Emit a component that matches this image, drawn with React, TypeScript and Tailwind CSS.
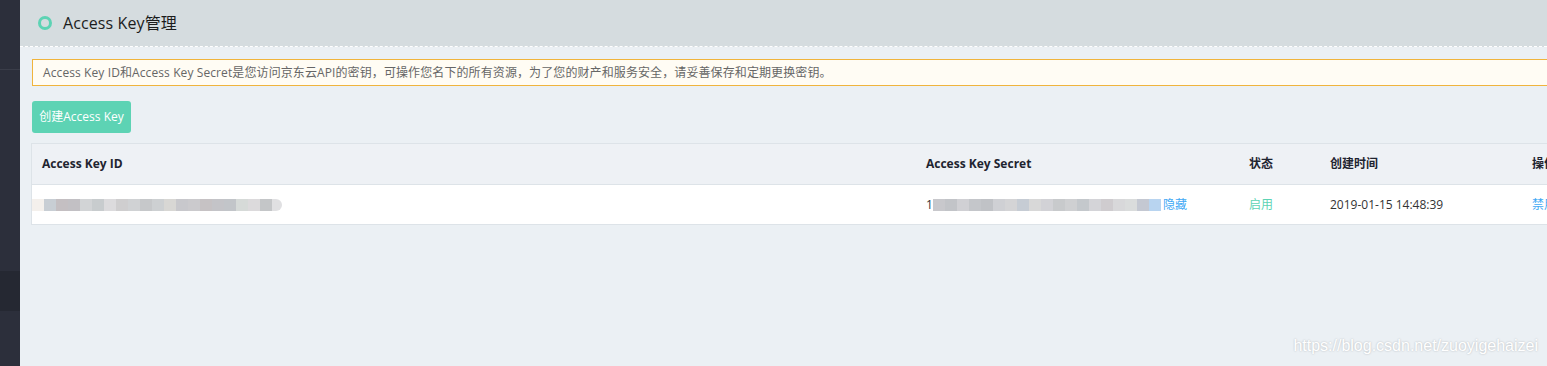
import React from "react";

const idBlocks = [
  "#f4f0ec", "#c8ced4", "#c4bfc2", "#c2c0c4", "#d2d4d6", "#c8ccce", "#dcdbdd", "#cfcecf",
  "#d0d2d4", "#c6c8ca", "#cdd0d2", "#d8d7d4", "#c8c8cc", "#cbcacd", "#c6c2c4", "#c4c4c8",
  "#c2c5c9", "#d6dad8", "#dcdadc", "#c4c6c8", "#e0e0e2",
];
const secretBlocks = [
  "#c8c8cc", "#c2c4c8", "#d0d0d4", "#c4c6ca", "#c0c2c6", "#cfd0d4", "#d4d4d6", "#c6ccd4",
  "#d8d8d8", "#d2d2d6", "#c8cacc", "#cfd0d2", "#c4c8cc", "#d4d4d8", "#cfcccf", "#d8d8da",
  "#dadcdc", "#c4c8d2", "#b8d4f0",
];

export default function App() {
  const font = { fontFamily: '"Open Sans", "Noto Sans CJK SC", sans-serif' };
  return (
    <div className="flex h-[366px] w-[1547px] overflow-hidden bg-[#ebf0f4]" style={font}>
      <div className="flex w-[20px] shrink-0 flex-col bg-[#2c2f3b]">
        <div className="h-[70px] border-b border-[#3a3d49]" />
        <div className="h-[201px]" />
        <div className="h-[40px] bg-[#252832]" />
        <div className="flex-1" />
      </div>
      <div className="flex min-w-0 flex-1 flex-col overflow-hidden">
        <div className="flex h-[47px] shrink-0 items-center border-b border-dashed border-white bg-[#d5dcdf] pl-[18px]">
          <span className="block h-[14px] w-[14px] rounded-full border-[3px] border-[#5dd3b4]" />
          <span className="ml-[11px] text-[16px] tracking-[0.1px] text-[#1c1c1c]">Access Key管理</span>
        </div>
        <div className="w-[1600px] pl-[12px]">
          <div className="mt-[12px] flex h-[27px] items-center border border-[#f0b43c] bg-[#fffcf4] pl-[10px] text-[12px] tracking-[0.1px] text-[#666]">
            Access Key ID和Access Key Secret是您访问京东云API的密钥，可操作您名下的所有资源，为了您的财产和服务安全，请妥善保存和定期更换密钥。
          </div>
          <button className="mt-[15px] flex h-[32px] w-[99px] items-center justify-center rounded-[3px] bg-[#5dd3b4] text-[12px] text-white">
            创建Access Key
          </button>
          <div className="ml-[-1px] mt-[10px] border border-[#dde3e8] bg-white">
            <div className="grid h-[41px] grid-cols-[884px_323px_81px_188px_100px] items-center border-b border-[#dde3e8] bg-[#eef1f5] text-[12px] font-bold text-[#1e2430]">
              <div className="pl-[10px]">Access Key ID</div>
              <div className="pl-[10px]">Access Key Secret</div>
              <div className="pl-[10px]">状态</div>
              <div className="pl-[10px]">创建时间</div>
              <div className="pl-[24px]">操作</div>
            </div>
            <div className="grid h-[39px] grid-cols-[884px_323px_81px_188px_100px] items-center text-[12px] text-[#333]">
              <div className="flex">
                {idBlocks.map((c, i) => (
                  <span
                    key={i}
                    className={`block h-[12px] ${i === idBlocks.length - 1 ? "w-[10px] rounded-r-full" : "w-[12px]"}`}
                    style={{ backgroundColor: c }}
                  />
                ))}
              </div>
              <div className="flex items-center pl-[10px]">
                <span>1</span>
                <span className="flex">
                  {secretBlocks.map((c, i) => (
                    <span key={i} className="block h-[12px] w-[12px]" style={{ backgroundColor: c }} />
                  ))}
                </span>
                <span className="ml-[2px] text-[#3fa9f5]">隐藏</span>
              </div>
              <div className="pl-[10px] text-[#5dd3b4]">启用</div>
              <div className="pl-[10px]">2019-01-15 14:48:39</div>
              <div className="pl-[24px] text-[#3fa9f5]">禁用</div>
            </div>
          </div>
        </div>
        <div className="flex flex-1 items-end justify-end pb-[8px] pr-[9px]">
          <span
            className="text-[16px] text-white [text-shadow:0_0_2px_rgba(0,0,0,0.25)]"
            style={{ fontFamily: '"Liberation Sans", Arial, sans-serif' }}
          >
            https://blog.csdn.net/zuoyigehaizei
          </span>
        </div>
      </div>
    </div>
  );
}
